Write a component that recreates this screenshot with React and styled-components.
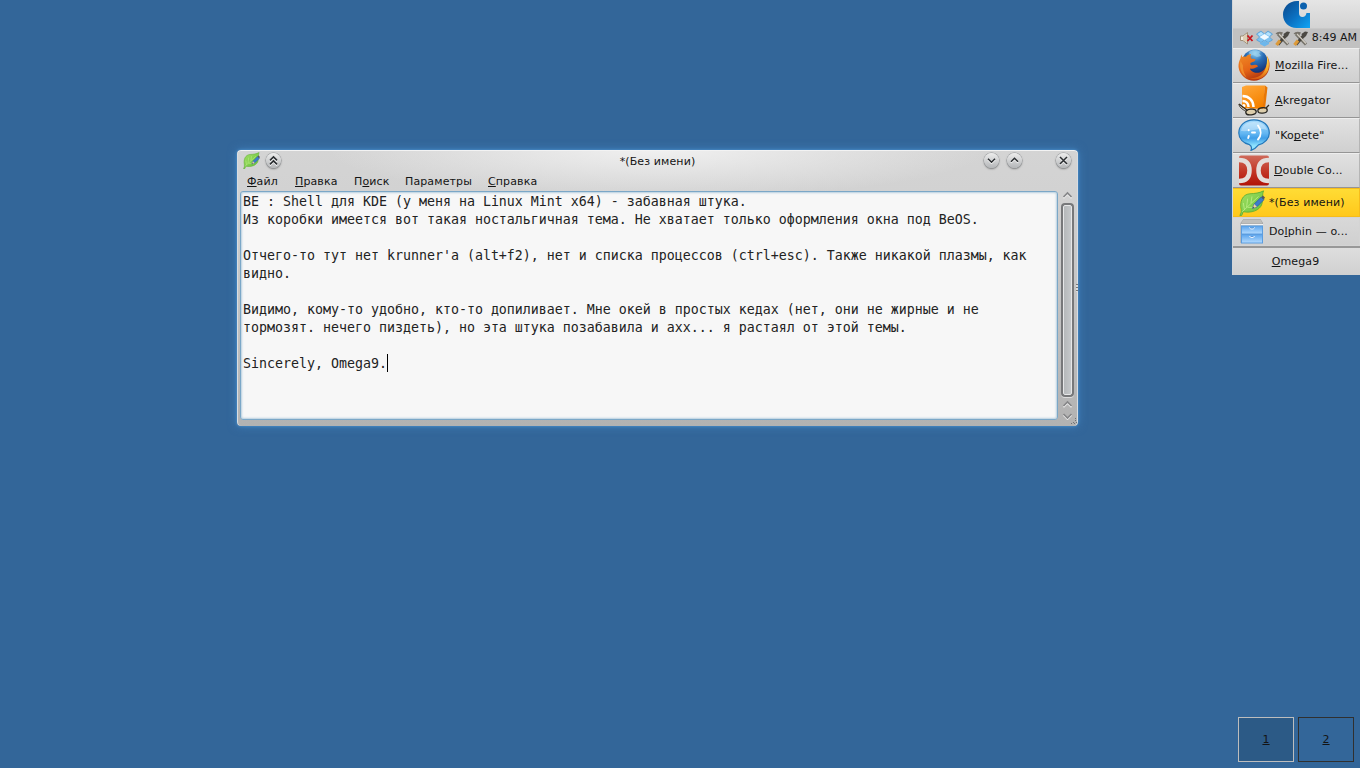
import styled, { createGlobalStyle } from "styled-components";

const lines = [
  "BE : Shell для KDE (у меня на Linux Mint x64) - забавная штука.",
  "Из коробки имеется вот такая ностальгичная тема. Не хватает только оформления окна под BeOS.",
  "",
  "Отчего-то тут нет krunner'а (alt+f2), нет и списка процессов (ctrl+esc). Также никакой плазмы, как",
  "видно.",
  "",
  "Видимо, кому-то удобно, кто-то допиливает. Мне окей в простых кедах (нет, они не жирные и не",
  "тормозят. нечего пиздеть), но эта штука позабавила и ахх... я растаял от этой темы.",
  "",
  "Sincerely, Omega9.",
];

export default function App() {
  return (
    <Desktop>
      <GlobalStyle />
      <Window>
        <TitleBar>
          <LeafIcon size={17} />
          <RoundButton $left={6}>
            <Glyph d="M4 7.4 7.5 3.9 11 7.4M4 11.4 7.5 7.9l3.5 3.5" />
          </RoundButton>
          <WindowTitle>*(Без имени)</WindowTitle>
          <RoundButton>
            <Glyph d="M4 5.8 7.5 9.3 11 5.8" />
          </RoundButton>
          <RoundButton $left={8}>
            <Glyph d="M4 8.8 7.5 5.3 11 8.8" />
          </RoundButton>
          <RoundButton $left={34}>
            <Glyph d="m4 4 7 7m0-7-7 7" />
          </RoundButton>
        </TitleBar>
        <MenuBar>
          <MenuItem $width={48}>
            <u>Ф</u>айл
          </MenuItem>
          <MenuItem $width={59}>
            <u>П</u>равка
          </MenuItem>
          <MenuItem $width={51}>
            П<u>о</u>иск
          </MenuItem>
          <MenuItem $width={83}>Параметры</MenuItem>
          <MenuItem>
            <u>С</u>правка
          </MenuItem>
        </MenuBar>
        <Body>
          <Editor>
            {lines.map((line, index) => (
              <Line key={index}>
                {line}
                {index === lines.length - 1 && <Caret />}
              </Line>
            ))}
          </Editor>
          <ScrollColumn>
            <Arrow />
            <ScrollTrack>
              <ScrollThumb />
            </ScrollTrack>
            <Arrow />
            <Arrow $down />
          </ScrollColumn>
          <EdgeDots />
          <Grip viewBox="0 0 8 8">
            <path d="M1 6h1v1H1zM3 5h1v1H3zM5 3h1v1H5zM5 1h1v1H5zM4 6h1v1H4zM6 5h1v1H6z" />
          </Grip>
        </Body>
      </Window>

      <Side>
        <Deskbar>
          <LogoRow>
            <LogoIcon />
          </LogoRow>
          <Tray>
            <MutedIcon />
            <DropboxIcon />
            <ToolsIcon />
            <ToolsIcon />
            <Clock>8:49 AM</Clock>
          </Tray>
          <Task>
            <FirefoxIcon />
            <TaskName>
              <u>M</u>ozilla Fire...
            </TaskName>
          </Task>
          <Task>
            <FeedIcon />
            <TaskName>
              <u>A</u>kregator
            </TaskName>
          </Task>
          <Task>
            <KopeteIcon />
            <TaskName>
              "Ko<u>p</u>ete"
            </TaskName>
          </Task>
          <Task>
            <CommanderIcon />
            <TaskName $shift={-1}>
              <u>D</u>ouble Co...
            </TaskName>
          </Task>
          <SmallTask $active>
            <LeafIcon size={26} />
            <TaskName>*(Без имени)</TaskName>
          </SmallTask>
          <SmallTask>
            <CabinetIcon />
            <TaskName>
              Do<u>l</u>phin — o...
            </TaskName>
          </SmallTask>
          <UserRow>
            <TaskName>
              <u>O</u>mega9
            </TaskName>
          </UserRow>
        </Deskbar>
        <Pager>
          <PagerCell $current>
            <u>1</u>
          </PagerCell>
          <PagerCell>
            <u>2</u>
          </PagerCell>
        </Pager>
      </Side>
    </Desktop>
  );
}

function Glyph({ d }) {
  return (
    <svg width="15" height="15" viewBox="0 0 15 15">
      <path d={d} fill="none" stroke="#fff" strokeWidth="1.4" transform="translate(0 1)" />
      <path d={d} fill="none" stroke="#2b2e31" strokeWidth="1.5" />
    </svg>
  );
}

function Arrow({ $down }) {
  const d = $down ? "M1.5 2 5.5 6l4-4" : "M1.5 6 5.5 2l4 4";
  return (
    <svg width="11" height="8" viewBox="0 0 11 8">
      <path d={d} fill="none" stroke="#eee" strokeWidth="1.5" transform="translate(0 1.2)" />
      <path d={d} fill="none" stroke="#858688" strokeWidth="1.6" />
    </svg>
  );
}

function LogoIcon() {
  return (
    <svg width="28" height="28" viewBox="0 0 28 28">
      <defs>
        <linearGradient id="logo" x1="0" y1="0" x2="1" y2="1">
          <stop offset="0" stopColor="#0a4688" />
          <stop offset=".5" stopColor="#0b6fc0" />
          <stop offset="1" stopColor="#0fa5f5" />
        </linearGradient>
      </defs>
      <path
        d="M17 1C7 0 1 7.500 1 14.500 1 22.500 7 28 14.500 28H28V13h-3.500c-.5 2.500-1.800 4-4 4-2.600 0-3.500-1.800-3.500-4z"
        fill="url(#logo)"
      />
      <circle cx="21.500" cy="6" r="3.500" fill="#0b61ae" />
    </svg>
  );
}

function MutedIcon() {
  return (
    <svg width="16" height="16" viewBox="0 0 16 16">
      <path d="M1.500 6h2.500L8.500 2.500V14l-4.500-3.500H1.500z" fill="#f1ebe1" stroke="#9f8f76" />
      <path d="M4 6.500v3.500L8 13V4z" fill="#ddceb2" />
      <path d="m8.500 5.500 5 5.500m0-5.500-5 5.500" stroke="#c8141c" strokeWidth="1.8" />
    </svg>
  );
}

function DropboxIcon() {
  return (
    <svg width="17" height="17" viewBox="0 0 17 17">
      <path
        d="m5 1 3.500 3L12 1l4.500 3-3 3 3 3L12 12.500 8.500 10 5 12.500.5 10l3-3-3-3z"
        fill="#7cc1f0"
        stroke="#3f93d5"
        strokeWidth=".6"
      />
      <path d="m8.500 4 5 3-5 3-5-3z" fill="#f0f9ff" />
      <path d="m4 12.300 1 .7 3.500-2.500L12 13l1-.7V14l-4.500 2.600L4 14z" fill="#6cb7ec" />
      <path d="m5 2 2.500 2L3.500 6 1.800 4zM12 2 9.500 4l4 2 1.700-2z" fill="#b5e1fb" />
    </svg>
  );
}

function ToolsIcon() {
  return (
    <svg width="17" height="17" viewBox="0 0 17 17">
      <path d="m4 4 10 10.500" stroke="#77746b" strokeWidth="3.200" />
      <path d="M1.500 4C3 1.500 6 1 9 2.500L7 6 5 4.500z" fill="#77736b" />
      <path d="M13 4 4 14.500" stroke="#47443d" strokeWidth="3" />
      <path d="M6 10.500 2.500 15" stroke="#dd9a38" strokeWidth="3.200" />
      <path d="M9.500 4 13 1.500 16 2l-2 4-3 2.500z" fill="#4b4944" />
      <path d="m5 4 9 9.500" stroke="#d4cfc5" strokeWidth="1.100" />
    </svg>
  );
}

function FirefoxIcon() {
  return (
    <svg width="32" height="32" viewBox="0 0 32 32">
      <defs>
        <radialGradient id="globe" cx=".5" cy=".15" r=".8">
          <stop offset="0" stopColor="#8fcdee" />
          <stop offset=".4" stopColor="#2b70b8" />
          <stop offset="1" stopColor="#0f286b" />
        </radialGradient>
        <linearGradient id="fox" x1=".1" y1="0" x2=".6" y2="1">
          <stop offset="0" stopColor="#ef8a25" />
          <stop offset=".55" stopColor="#e56416" />
          <stop offset="1" stopColor="#a9300f" />
        </linearGradient>
        <linearGradient id="tail" x1="0" y1="0" x2="0" y2="1">
          <stop offset="0" stopColor="#fce35a" />
          <stop offset=".6" stopColor="#f5a526" />
          <stop offset="1" stopColor="#d8550f" />
        </linearGradient>
      </defs>
      <circle cx="17" cy="13.500" r="13" fill="url(#globe)" />
      <path d="M11 3c3-2 8-2.500 12 0l-2 1 2 3-4 1-4-2-3 1z" fill="#a5d9f1" opacity=".6" />
      <path
        d="M3.300 5.500 2.400 9.500C1 12 .4 15 .5 18 1.500 26 8 31.700 16 31.700S31 25.500 31.600 17c.2-4-.8-8-3-10.500 1 4 1 8-.8 11.500-2 4-6 6.500-10.600 5.700-3-.5-4.600-2.300-5.300-4.200 2 .6 4 .4 5.600-.8 1.300-1 2.700-.8 2.300-1.800-.8-1-2.200-1.500-4-.8l-2.300.1c-1-.4-1.200-1-1.200-1.800.5-1.100 2-1.100 3.200-1.700 1.500-.8 1.900-1.600 1.800-2.500-1.700-.4-3.200-.3-4.300-1-.6-1-.3-2.600 0-4.200C10.500 5.300 9 6.500 8 7.700 6.500 7.200 5 7.300 4.200 8z"
        fill="url(#fox)"
      />
      <path
        d="M28.600 6.500c3.600 7 3 15-2 20-4 4-10.500 5-15.600 2.500 5.500.8 11-1 14-5 3.500-4.500 4.800-11 3.600-17.500z"
        fill="url(#tail)"
      />
      <path d="M2.500 12c-1.500 7 1 13 6 16.500-2.500-4-4-8-3.500-12z" fill="#f29631" opacity=".8" />
    </svg>
  );
}

function FeedIcon() {
  return (
    <svg width="32" height="32" viewBox="0 0 32 32">
      <defs>
        <linearGradient id="feed" x1="0" y1="0" x2=".5" y2="1">
          <stop offset="0" stopColor="#ffa83a" />
          <stop offset="1" stopColor="#f58200" />
        </linearGradient>
      </defs>
      <path d="M4 3 8 1.500h19L25 25l-21-1z" fill="url(#feed)" />
      <path d="m27 1.500 2.500 2L27 25l-2.500-.5z" fill="#e87705" />
      <path
        d="M4.500 12c6.500 0 11 4.500 11 11M4.500 17c3.500 0 6 2.500 6 6"
        fill="none"
        stroke="#fff"
        strokeWidth="2.500"
      />
      <circle cx="5.800" cy="21.800" r="1.700" fill="#fff" />
      <path d="m1 20 8.500 6.500M28 24l3-3" stroke="#33291b" strokeWidth="1.300" />
      <g fill="#e8c77c" fillOpacity=".45" stroke="#292722" strokeWidth="1.300">
        <ellipse cx="13" cy="28" rx="5.200" ry="2.800" transform="rotate(-7 13 28)" />
        <ellipse cx="24.500" cy="26.500" rx="4.700" ry="2.700" transform="rotate(-7 24 26)" />
      </g>
      <path d="M1 20c0 3 3 5 7 7.500" fill="none" stroke="#423d34" />
    </svg>
  );
}

function KopeteIcon() {
  return (
    <svg width="32" height="32" viewBox="0 0 32 32">
      <defs>
        <linearGradient id="bubble" x1="0" y1="0" x2="0" y2="1">
          <stop offset="0" stopColor="#a9dcfc" />
          <stop offset=".45" stopColor="#62b6f2" />
          <stop offset=".6" stopColor="#3f9ee8" />
          <stop offset=".85" stopColor="#8fe4ff" />
        </linearGradient>
      </defs>
      <path
        d="M16 .8C7 .8.8 6.500.8 14c0 5.500 4.200 10 10.700 11.700 2.300 1.300 2.500 3 1.500 5.700 3-1 5.500-3 7.500-5.500 6.500-1.400 10.800-6.400 10.800-12C31.300 6.500 25 .8 16 .8z"
        fill="url(#bubble)"
        stroke="#2377ba"
        strokeWidth="1.200"
      />
      <path d="M3 12C4 6 9 3 16 3s12 3 13 8c-7-3-15 2-26 1z" fill="#fff" opacity=".35" />
      <g fill="none" stroke="#fff" strokeWidth="1.900" strokeLinecap="round">
        <path d="M20 6.500c3.500 4.500 3.500 10 0 14M14 13.500h3M10.700 11v.3M10.800 17l-.6 2" />
      </g>
    </svg>
  );
}

function CommanderIcon() {
  return (
    <svg width="32" height="32" viewBox="0 0 32 32">
      <defs>
        <linearGradient id="commander" x1="0" y1="0" x2="0" y2="1">
          <stop offset="0" stopColor="#cf6a5a" />
          <stop offset=".55" stopColor="#c23423" />
          <stop offset="1" stopColor="#b11308" />
        </linearGradient>
      </defs>
      <rect x="1" y="1.500" width="30" height="30" rx="2" fill="url(#commander)" />
      <path
        d="M1 6c7.500 0 10.500 4.300 10.500 10.500S8.500 27 1 27M31 6c-7.500 0-10.500 4.300-10.500 10.500S23.500 27 31 27"
        fill="none"
        stroke="#e3ddda"
        strokeWidth="4.500"
      />
    </svg>
  );
}

function LeafIcon({ size }) {
  return (
    <svg width={size} height={size} viewBox="0 0 24 24">
      <defs>
        <linearGradient id="leaf" x1="0" y1="0" x2="1" y2="1">
          <stop offset="0" stopColor="#a4e066" />
          <stop offset="1" stopColor="#62bf38" />
        </linearGradient>
      </defs>
      <path
        d="M.8 23.500c1-2 1.500-3 1.200-5.500C.5 11 3 4 10 3.500c5-.3 8.500-.6 12.700-2.700-1.500 3.500-.2 6-1.500 12C19.500 19 11 21.500 4 20l-1.500 3.500z"
        fill="url(#leaf)"
        stroke="#5fae33"
        strokeWidth=".8"
      />
      <path
        d="M3 20 18 6M7 16l1-8M11 12l1-6M8 16h7M5 18l-1-6"
        fill="none"
        stroke="#c5f08e"
        strokeWidth=".7"
      />
      <path d="m12.500 17 1.500-4 6.500-6.500L23 9l-6.500 6.500z" fill="#3d7dcc" stroke="#2c5aa3" strokeWidth=".7" />
      <path d="m12.500 17 1.500-4 2.500 2.500z" fill="#f2d19e" />
      <path d="m12.500 17 .7-1.800 1.100 1.200zM20.500 6.500 22 5l2 2-1.200 1.800z" fill="#55585b" />
    </svg>
  );
}

function CabinetIcon() {
  return (
    <svg width="26" height="26" viewBox="0 0 26 26">
      <defs>
        <linearGradient id="drawer" x1="0" y1="0" x2="0" y2="1">
          <stop offset="0" stopColor="#5ba4ed" />
          <stop offset="1" stopColor="#b5dcff" />
        </linearGradient>
      </defs>
      <path d="M4.500 0h17L24 4v20H1.500V4z" fill="#a2a2a2" />
      <path d="M4.500.5h17l2 4H2z" fill="#bfbfbd" />
      <path d="M2 5h22v1.500H2z" fill="#f3f3f3" />
      <rect x="2.500" y="7" width="21" height="8" fill="url(#drawer)" stroke="#5b9de0" />
      <rect x="2.500" y="15.500" width="21" height="8.500" fill="url(#drawer)" stroke="#5b9de0" />
      <path d="M10.500 8.500c0 2 5 2 5 0M10.500 17c0 2 5 2 5 0" fill="#4a8bd2" stroke="#f5faff" />
    </svg>
  );
}

const GlobalStyle = createGlobalStyle`
  body {
    margin: 0;
    overflow: hidden;
  }
  * {
    box-sizing: border-box;
  }
  svg {
    display: block;
    flex-shrink: 0;
  }
  u {
    text-decoration-thickness: 1px;
    text-underline-offset: 1px;
    text-decoration-skip-ink: none;
  }
`;

const Desktop = styled.div`
  width: 1360px;
  height: 768px;
  display: flex;
  justify-content: space-between;
  background: #336699;
  color: #141414;
  font-family: "DejaVu Sans", sans-serif;
  font-size: 11px;
  letter-spacing: 0.12px;
`;

const Window = styled.section`
  display: flex;
  flex-direction: column;
  width: 841px;
  height: 276px;
  margin: 150px 0 0 237px;
  border-radius: 4px;
  background: radial-gradient(ellipse 330px 48px at 50% 0, #f0f0f0, rgba(225, 225, 225, 0) 100%),
    linear-gradient(#d4d4d4, #d2d2d2 15%, #b2b2b2);
  box-shadow:
    inset 0 1px #f3f3f3,
    inset 1px 0 #d8dde2,
    inset -1px 0 #d8dde2,
    0 0 3px #4f97d5,
    0 0 10px #3f7fbb;
`;

const TitleBar = styled.header`
  display: flex;
  align-items: center;
  height: 21px;
  padding: 0 7px 0 6px;
`;

const WindowTitle = styled.h1`
  flex: 1;
  margin: 2px 0 0 50px;
  font-size: 11px;
  font-weight: 400;
  text-align: center;
`;

const RoundButton = styled.span`
  width: 15px;
  height: 15px;
  margin-left: ${({ $left }) => $left || 0}px;
  border-radius: 50%;
  background: linear-gradient(#ededed, #b4b6b8);
  box-shadow:
    0 0 0 0.5px #96999c,
    0 1px 2px #777;
`;

const MenuBar = styled.nav`
  display: flex;
  height: 20px;
  padding-left: 10px;
  line-height: 21px;
`;

const MenuItem = styled.span`
  width: ${({ $width }) => ($width ? `${$width}px` : "auto")};
  white-space: nowrap;
`;

const Body = styled.div`
  position: relative;
  display: flex;
  height: 230px;
  padding-left: 3px;
`;

const Editor = styled.main`
  width: 818px;
  height: 229px;
  padding: 1px 2px 0;
  border: 1px solid #7ba7c7;
  border-radius: 3px;
  background: #f7f7f7;
  box-shadow: inset 0 0 2px 1px #b6cfdf;
  color: #222;
  font-family: "DejaVu Sans Mono", monospace;
  font-size: 13.29px;
  line-height: 18px;
  letter-spacing: 0;
`;

const Line = styled.div`
  display: flex;
  height: 18px;
  white-space: pre;
`;

const Caret = styled.span`
  width: 1px;
  height: 18px;
  margin-top: -1px;
  background: #000;
`;

const ScrollColumn = styled.div`
  display: flex;
  flex-direction: column;
  align-items: center;
  width: 13px;
  margin-left: 3px;
  gap: 4px;
`;

const ScrollTrack = styled.div`
  width: 13px;
  height: 194px;
  padding: 2px;
  border-radius: 4px;
  background: #77787a;
  box-shadow: 0 1px #ddd;
  & + svg {
    margin-top: -1px;
  }
`;

const ScrollThumb = styled.div`
  height: 190px;
  border: 1px solid #e6e7e8;
  border-radius: 2px;
  background: linear-gradient(90deg, #b5b8ba, #c5c8ca);
`;

const EdgeDots = styled.i`
  position: absolute;
  top: 93px;
  right: 0;
  width: 2px;
  height: 8px;
  background: repeating-linear-gradient(#777 0 1px, #ddd 1px 3px);
`;

const Grip = styled.svg`
  position: absolute;
  right: 0;
  bottom: -4px;
  width: 8px;
  height: 8px;
  fill: #707375;
`;

const Side = styled.aside`
  display: flex;
  flex-direction: column;
  justify-content: space-between;
  width: 128px;
`;

const Deskbar = styled.div`
  border-left: 1px solid #d3d6d9;
`;

const LogoRow = styled.div`
  display: flex;
  justify-content: center;
  height: 28px;
  padding-right: 1px;
  background: linear-gradient(#e5e5e5, #d3d3d3);
`;

const Tray = styled.div`
  display: flex;
  align-items: center;
  height: 20px;
  padding: 0 3px 1px 6px;
  gap: 1px;
  border-top: 1px solid #c9c9c9;
  background: #c1c1c1;
`;

const Clock = styled.time`
  margin-left: auto;
  margin-top: -1px;
  letter-spacing: 0;
  white-space: nowrap;
`;

const Task = styled.div`
  display: flex;
  align-items: center;
  height: 35px;
  padding-left: 5px;
  gap: 5px;
  border-top: 1px solid #eee;
  border-right: 1px solid #b5b5b5;
  border-bottom: 1px solid #959595;
  background: linear-gradient(#e1e1e1, #d0d0d0);
  & > svg {
    margin-top: -1px;
  }
`;

const SmallTask = styled.div`
  display: flex;
  align-items: center;
  height: 29px;
  padding-left: 6px;
  gap: 4px;
  border: 1px solid ${({ $active }) => ($active ? "#f6bc1b" : "#d4d4d4")};
  border-left: 0;
  background: ${({ $active }) =>
    $active ? "linear-gradient(#ffdc35, #ffc81b)" : "linear-gradient(#d8d8d8, #d0d0d0)"};
`;

const TaskName = styled.span`
  margin-left: ${({ $shift }) => $shift || 0}px;
  white-space: nowrap;
`;

const UserRow = styled.div`
  display: flex;
  align-items: center;
  justify-content: center;
  height: 29px;
  padding: 0 2px 1px 0;
  border-top: 2px solid #989898;
  background: linear-gradient(#dedede, #d0d0d0);
`;

const Pager = styled.div`
  display: flex;
  gap: 4px;
  margin: 0 0 6px 6px;
`;

const PagerCell = styled.div`
  display: flex;
  align-items: center;
  justify-content: center;
  width: 56px;
  height: 45px;
  border: 1px solid ${({ $current }) => ($current ? "#bdbdbd" : "#303030")};
  background: ${({ $current }) => ($current ? "#2c5a86" : "transparent")};
`;
